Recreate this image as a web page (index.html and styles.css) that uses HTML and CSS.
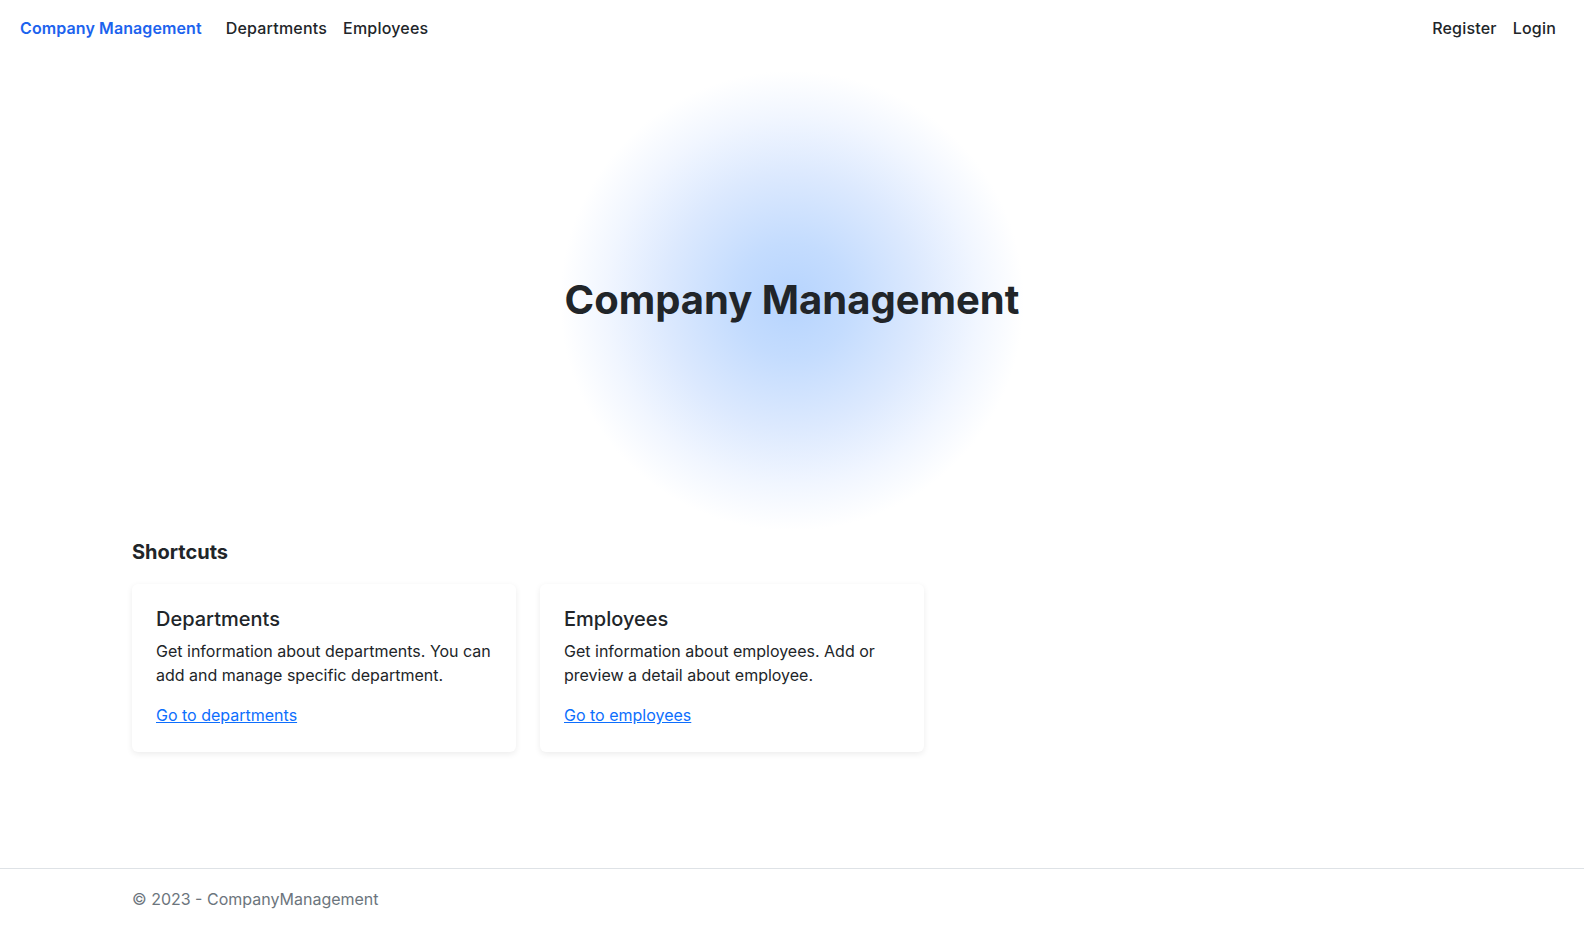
FILE: index.html
```html
<!DOCTYPE html>
<html lang="en">
<head>
<meta charset="utf-8">
<title>Company Management</title>
<link rel="stylesheet" href="styles.css">
</head>
<body>
<header class="navbar">
  <nav class="nav-left">
    <a class="brand" href="#">Company Management</a>
    <a class="nav-link" href="#">Departments</a>
    <a class="nav-link" href="#">Employees</a>
  </nav>
  <nav class="nav-right">
    <a class="nav-link" href="#">Register</a>
    <a class="nav-link" href="#">Login</a>
  </nav>
</header>
<main class="main">
  <section class="hero">
    <h1 class="hero-title">Company Management</h1>
  </section>
  <section class="container">
    <h2 class="section-title">Shortcuts</h2>
    <div class="cards">
      <div class="card">
        <h3 class="card-title">Departments</h3>
        <p class="card-text">Get information about departments. You can add and manage specific department.</p>
        <a class="card-link" href="#">Go to departments</a>
      </div>
      <div class="card">
        <h3 class="card-title">Employees</h3>
        <p class="card-text">Get information about employees. Add or preview a detail about employee.</p>
        <a class="card-link" href="#">Go to employees</a>
      </div>
    </div>
  </section>
</main>
<footer class="footer">
  <div class="container footer-inner">&copy; 2023 - CompanyManagement</div>
</footer>
</body>
</html>
```

FILE: styles.css
```css
* { box-sizing: border-box; }
html, body { margin: 0; padding: 0; }
body {
  font-family: Inter, "Noto Sans", "Liberation Sans", sans-serif;
  font-size: 16px;
  line-height: 1.5;
  color: #212529;
  background: #fff;
  min-height: 929px;
  display: flex;
  flex-direction: column;
}
a { text-decoration: none; }
.navbar {
  height: 56px;
  display: flex;
  align-items: center;
  justify-content: space-between;
  padding: 0 28px 0 20px;
}
.nav-left, .nav-right { display: flex; align-items: center; }
.brand {
  color: #1c63ee;
  font-weight: 600;
  font-size: 16px;
  letter-spacing: 0.1px;
  margin-right: 24px;
}
.nav-link {
  color: #212529;
  font-weight: 500;
  font-size: 16px;
  letter-spacing: 0.2px;
  padding: 0 8px;
}
.nav-left .brand + .nav-link { padding-left: 0; }
.nav-right .nav-link:last-child { padding-right: 0; }
.main { flex: 1; }
.hero {
  height: 480px;
  padding-top: 8px;
  display: flex;
  align-items: center;
  justify-content: center;
  background: radial-gradient(ellipse 232px 230px at 50% 51%, #b6d4fe 0%, #c4dcfe 25%, #dce9fe 55%, #f1f6ff 80%, rgba(255,255,255,0) 100%);
}
.hero-title {
  margin: 0;
  font-size: 40px;
  font-weight: 700;
  line-height: 1.2;
  color: #212529;
}
.container {
  width: 1320px;
  margin: 0 auto;
}
.section-title {
  margin: 4px 0 20px;
  font-size: 20px;
  font-weight: 700;
  line-height: 24px;
}
.cards {
  display: flex;
  gap: 24px;
}
.card {
  width: 384px;
  padding: 23px 24px 25px;
  background: #fff;
  border-radius: 6px;
  box-shadow: 0 2px 6px rgba(0,0,0,0.08);
}
.card-title {
  margin: 0 0 8px;
  font-size: 20px;
  font-weight: 500;
  line-height: 24px;
}
.card-text {
  margin: 0 0 16px;
  font-size: 16px;
  line-height: 24px;
}
.card-link {
  color: #0d6efd;
  text-decoration: underline;
  line-height: 24px;
}
.footer {
  border-top: 1px solid #dee2e6;
  height: 61px;
}
.footer-inner {
  line-height: 60px;
  color: #6c757d;
}
```
